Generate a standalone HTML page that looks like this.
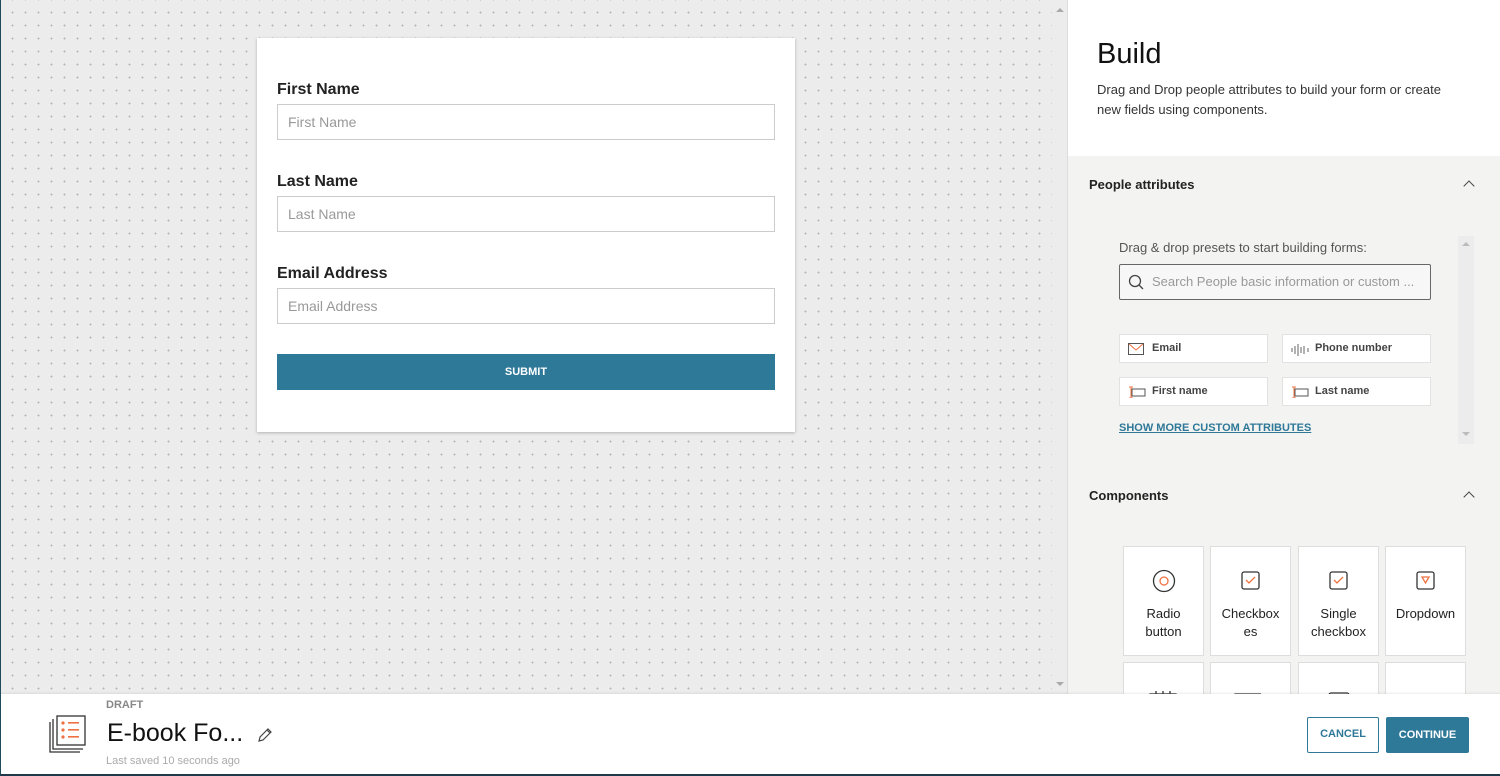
<!DOCTYPE html>
<html><head><style>
*{box-sizing:border-box;margin:0;padding:0}
body{width:1500px;height:776px;overflow:hidden;font-family:"Liberation Sans",Arial,sans-serif;background:#fff;position:relative;color:#222}
.frame{position:absolute;inset:0;border-left:1px solid #1e4a5a;border-bottom:2px solid #1e3a4a;pointer-events:none;z-index:10}
.canvas{position:absolute;left:0;top:0;width:1052px;height:694px;background-color:#ececec;background-image:radial-gradient(circle,#b5b5b5 0.8px,transparent 1px);background-size:13px 13px;background-position:6px 6px}
.sb{position:absolute;left:1052px;top:0;width:16px;height:694px;background:#ececec}
.form{position:absolute;left:257px;top:38px;width:538px;height:394px;background:#fff;box-shadow:0 1px 3px rgba(0,0,0,.25)}
.lbl{position:absolute;left:20px;font-size:16px;font-weight:bold;color:#222}
.inp{position:absolute;left:20px;width:498px;height:36px;border:1px solid #ccc;font-size:14px;color:#999;padding:9px 10px}
.btn{position:absolute;left:20px;top:316px;width:498px;height:36px;background:#2e7898;color:#fff;font-size:11px;font-weight:bold;text-align:center;line-height:36px}
.panel{position:absolute;left:1067px;top:0;width:433px;height:694px;background:#f3f3f2;border-left:1px solid #ddd}
.head{position:absolute;left:0;top:0;width:433px;height:156px;background:#fff}
.head h1{position:absolute;left:29px;top:38px;font-size:29px;font-weight:normal;color:#111}
.head p{position:absolute;left:29px;top:80px;width:368px;font-size:13px;line-height:20px;color:#333}
.sec{position:absolute;left:21px;font-size:13px;font-weight:bold;color:#222}
.chev{position:absolute;left:397px;width:8px;height:8px;border-left:1.5px solid #444;border-top:1.5px solid #444;transform:rotate(45deg)}
.attr{position:absolute;width:149px;height:29px;background:#fff;border:1px solid #e2e2e2;font-size:11px;font-weight:bold;color:#444;padding:7px 0 0 32px}
.attr svg{position:absolute;left:8px;top:8px}
.comp{position:absolute;width:81px;height:110px;background:#fff;border:1px solid #ddd;text-align:center;font-size:13px;line-height:18px;color:#222;overflow:hidden}
.comp svg{position:absolute;left:28px;top:22px}
.comp span{position:absolute;left:0;right:0;top:58px}
.foot{position:absolute;left:0;top:694px;width:1500px;height:82px;background:#fff;box-shadow:0 -1px 2px rgba(0,0,0,.08);z-index:5}
</style></head><body>
<div class="canvas"></div>
<div class="sb"><div style="position:absolute;left:4px;top:8px;border:4px solid transparent;border-bottom:4px solid #aaa;border-top:0"></div><div style="position:absolute;left:4px;top:682px;border:4px solid transparent;border-top:4px solid #aaa;border-bottom:0"></div></div>
<div class="form">
<div class="lbl" style="top:43px">First Name</div><div class="inp" style="top:66px">First Name</div>
<div class="lbl" style="top:135px">Last Name</div><div class="inp" style="top:158px">Last Name</div>
<div class="lbl" style="top:227px">Email Address</div><div class="inp" style="top:250px">Email Address</div>
<div class="btn">SUBMIT</div>
</div>
<div class="panel">
<div class="head"><h1>Build</h1><p>Drag and Drop people attributes to build your form or create new fields using components.</p></div>
<div class="sec" style="top:177px">People attributes</div><div class="chev" style="top:182px"></div>
<div style="position:absolute;left:390px;top:236px;width:16px;height:208px;background:#ececec"><div style="position:absolute;left:4px;top:6px;border:4px solid transparent;border-bottom:4px solid #bbb;border-top:0"></div><div style="position:absolute;left:4px;top:196px;border:4px solid transparent;border-top:4px solid #bbb;border-bottom:0"></div></div>
<div style="position:absolute;left:51px;top:240px;font-size:13px;color:#555">Drag &amp; drop presets to start building forms:</div>
<div style="position:absolute;left:51px;top:264px;width:312px;height:36px;border:1px solid #666;border-radius:2px;background:#f7f7f7;font-size:13px;color:#999;padding:9px 0 0 32px">Search People basic information or custom ...
<svg style="position:absolute;left:8px;top:9px" width="16" height="16"><circle cx="7" cy="7" r="5.5" fill="none" stroke="#444" stroke-width="1.3"/><path d="M11 11l4 4" stroke="#444" stroke-width="1.3"/></svg></div>
<div class="attr" style="left:51px;top:334px"><svg width="16" height="12"><rect x=".5" y=".5" width="15" height="11" fill="none" stroke="#555"/><path d="M1 1l7 6 7-6" fill="none" stroke="#f07040"/></svg>Email</div>
<div class="attr" style="left:214px;top:334px"><svg width="18" height="14"><path d="M1 5v4M4 3v8M7 1v12M10 4v6M13 3v8M17 5v4" stroke="#666"/></svg>Phone number</div>
<div class="attr" style="left:51px;top:377px"><svg width="18" height="12"><rect x="4" y="3" width="13" height="7" fill="none" stroke="#555"/><path d="M3 1v11M1 1h4M1 12h4" stroke="#f07040"/></svg>First name</div>
<div class="attr" style="left:214px;top:377px"><svg width="18" height="12"><rect x="4" y="3" width="13" height="7" fill="none" stroke="#555"/><path d="M3 1v11M1 1h4M1 12h4" stroke="#f07040"/></svg>Last name</div>
<div style="position:absolute;left:51px;top:422px;font-size:11px;font-weight:bold;color:#2e7898;text-decoration:underline">SHOW MORE CUSTOM ATTRIBUTES</div>
<div class="sec" style="top:488px">Components</div><div class="chev" style="top:493px"></div>
<div class="comp" style="left:55px;top:546px"><svg width="24" height="24"><circle cx="12" cy="12" r="10.5" fill="none" stroke="#333" stroke-width="1.3"/><circle cx="12" cy="12" r="4" fill="none" stroke="#f07040" stroke-width="1.3"/></svg><span>Radio<br>button</span></div>
<div class="comp" style="left:142px;top:546px"><svg width="24" height="24"><rect x="3" y="3" width="17" height="17" rx="2" fill="none" stroke="#333" stroke-width="1.3"/><path d="M7 11l3 3 6-6" fill="none" stroke="#f07040" stroke-width="1.3"/></svg><span>Checkbox<br>es</span></div>
<div class="comp" style="left:230px;top:546px"><svg width="24" height="24"><rect x="3" y="3" width="17" height="17" rx="2" fill="none" stroke="#333" stroke-width="1.3"/><path d="M7 11l3 3 6-6" fill="none" stroke="#f07040" stroke-width="1.3"/></svg><span>Single<br>checkbox</span></div>
<div class="comp" style="left:317px;top:546px"><svg width="24" height="24"><rect x="3" y="3" width="17" height="17" rx="2" fill="none" stroke="#333" stroke-width="1.3"/><path d="M8 8h7l-3.5 6z" fill="none" stroke="#f07040" stroke-width="1.3"/></svg><span>Dropdown</span></div>
<div class="comp" style="left:55px;top:662px"><svg width="28" height="24" style="left:25px"><rect x="1" y="9" width="26" height="20" fill="none" stroke="#333" stroke-width="1.3"/><path d="M1 14h26M7 6v5M14 6v5M21 6v5" stroke="#333" stroke-width="1.3"/></svg></div>
<div class="comp" style="left:142px;top:662px"><svg width="34" height="24" style="left:23px"><path d="M1 30V9h26" fill="none" stroke="#333" stroke-width="1.3"/><g fill="#333"><circle cx="8" cy="14" r="1.2"/><circle cx="14" cy="14" r="1.2"/><circle cx="20" cy="14" r="1.2"/></g><path d="M26 12l4 4" stroke="#f07040"/></svg></div>
<div class="comp" style="left:230px;top:662px"><svg width="24" height="24"><rect x="2" y="8" width="20" height="20" rx="2" fill="none" stroke="#333" stroke-width="1.3"/><path d="M6 14h8M6 19h12" stroke="#333" stroke-width="1.3"/></svg></div>
<div class="comp" style="left:317px;top:662px"><svg width="28" height="24" style="left:26px"><rect x="1" y="10" width="26" height="18" fill="none" stroke="#333" stroke-width="1.3"/><path d="M1 10l13 9 13-9" fill="none" stroke="#f07040" stroke-width="1.3"/></svg></div>
</div>
<div class="foot">
<svg style="position:absolute;left:48px;top:20px" width="40" height="40"><path d="M2 8v30h30M5 5v30h30" fill="none" stroke="#333" stroke-width="1.3"/><rect x="9" y="2" width="28" height="29" fill="#fff" stroke="#333" stroke-width="1.3"/><g fill="#f07040"><circle cx="15" cy="9" r="1.6"/><circle cx="15" cy="16" r="1.6"/><circle cx="15" cy="23" r="1.6"/><rect x="20" y="8" width="11" height="1.6"/><rect x="20" y="15" width="11" height="1.6"/><rect x="20" y="22" width="11" height="1.6"/></g></svg>
<div style="position:absolute;left:106px;top:5px;font-size:11px;font-weight:bold;color:#888">DRAFT</div>
<div style="position:absolute;left:107px;top:25px;font-size:25px;color:#111">E-book Fo...</div>
<svg style="position:absolute;left:257px;top:33px" width="16" height="16"><path d="M2 14l1-4 8-8 3 3-8 8z M10 3l3 3" fill="none" stroke="#444" stroke-width="1.2"/></svg>
<div style="position:absolute;left:106px;top:61px;font-size:11px;color:#aaa">Last saved 10 seconds ago</div>
<div style="position:absolute;left:1307px;top:23px;width:72px;height:36px;border:1px solid #2e7898;border-radius:2px;color:#2e7898;font-size:11px;font-weight:bold;text-align:center;line-height:33px">CANCEL</div>
<div style="position:absolute;left:1386px;top:23px;width:83px;height:36px;background:#2e7898;border-radius:2px;color:#fff;font-size:11px;font-weight:bold;text-align:center;line-height:36px">CONTINUE</div>
</div>
<div class="frame"></div>
</body></html>
